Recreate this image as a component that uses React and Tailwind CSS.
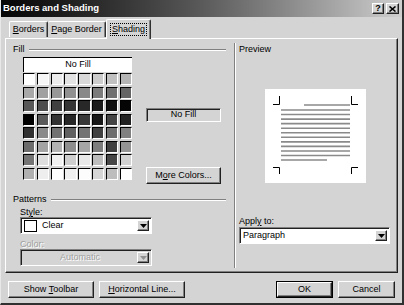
import React from 'react';

const raised = 'border border-t-white border-l-white border-r-[#202020] border-b-[#202020] shadow-[inset_-1px_-1px_0_#808080]';
const sunken = 'border border-t-[#808080] border-l-[#808080] border-r-white border-b-white shadow-[inset_1px_1px_0_#202020]';

const swatches = [
  ['#ffffff', '#f6f6f6', '#ececec', '#e2e2e2', '#d8d8d8', '#cccccc', '#c0c0c0', '#b4b4b4'],
  ['#a8a8a8', '#a0a0a0', '#989898', '#909090', '#888888', '#7c7c7c', '#707070', '#646464'],
  ['#585858', '#4c4c4c', '#404040', '#343434', '#282828', '#1c1c1c', '#101010', '#050505'],
  ['#000000', '#5a5a5a', '#333333', '#262626', '#383838', '#181818', '#444444', '#222222'],
  ['#303030', '#8a8a8a', '#727272', '#606060', '#747474', '#404040', '#6e6e6e', '#808080'],
  ['#6c6c6c', '#a4a4a4', '#b2b2b2', '#8e8e8e', '#a6a6a6', '#7e7e7e', '#3e3e3e', '#949494'],
  ['#747474', '#dedede', '#f0f0f0', '#cecece', '#e8e8e8', '#bcbcbc', '#464646', '#d2d2d2'],
  ['#b0b0b0', '#eeeeee', '#ffffff', '#f0f0f0', '#fcfcfc', '#d6d6d6', '#bdbdbd', '#ffffff'],
];

function Acc({ children }) {
  return <span className="underline underline-offset-[1px]">{children}</span>;
}

function Arrow({ disabled }) {
  return (
    <div className={`w-[12px] self-stretch flex items-center justify-center bg-[#d4d4d4] ${raised}`}>
      <svg width="7" height="4" viewBox="0 0 7 4">
        <path d="M0 0h7L3.5 4z" fill={disabled ? '#909090' : '#000'} />
      </svg>
    </div>
  );
}

function GroupLabel({ children }) {
  return (
    <div className="flex items-center gap-[4px] h-[11px]">
      <span className="leading-[11px]">{children}</span>
      <div className="flex-1 h-[2px] border-t border-t-[#808080] border-b border-b-white" />
    </div>
  );
}

function PreviewPage() {
  const full = [];
  for (let i = 0; i < 11; i++) full.push(21 + i * 4.55);
  return (
    <div className="w-[101px] h-[94px] bg-white">
      <svg width="101" height="94" viewBox="0 0 101 94" className="block">
        <g stroke="#000" strokeWidth="1" fill="none">
          <path d="M8 15.5H14.5V7" />
          <path d="M93 15.5H86.5V7" />
          <path d="M8 78.5H14.5V85" />
          <path d="M93 78.5H86.5V85" />
        </g>
        <g stroke="#8a8a8a" strokeWidth="1.6">
          <line x1="39" y1="16" x2="85" y2="16" />
          {full.map((y) => (
            <line key={y} x1="16" y1={y} x2="85" y2={y} />
          ))}
          <line x1="16" y1="71" x2="62" y2="71" />
        </g>
      </svg>
    </div>
  );
}

export default function App() {
  return (
    <div className="w-[404px] h-[305px] bg-[#d4d4d4] flex flex-col border-l border-l-[#e8e8e8] border-r-2 border-r-[#303030] border-b-2 border-b-[#303030] font-['Liberation_Sans',Arial,sans-serif] text-[9px] text-black whitespace-nowrap overflow-hidden select-none">
      {/* title bar */}
      <div className="h-[17px] flex items-center pl-[2px] pr-[3px] bg-gradient-to-r from-[#060606] via-[#5a5a5a] to-[#cfcfcf]">
        <span className="text-white font-bold text-[9.5px]">Borders and Shading</span>
        <div className="ml-auto flex gap-[1px]">
          <div className={`w-[12px] h-[11px] bg-[#d4d4d4] flex items-center justify-center font-bold text-[9px] leading-none ${raised}`}>?</div>
          <div className={`w-[13px] h-[11px] bg-[#d4d4d4] flex items-center justify-center ml-[1px] ${raised}`}>
            <svg width="7" height="6" viewBox="0 0 7 6">
              <path d="M0.5 0.5L6.5 5.5M6.5 0.5L0.5 5.5" stroke="#000" strokeWidth="1.6" />
            </svg>
          </div>
        </div>
      </div>

      {/* tabs */}
      <div className="h-[19px] mt-[2px] pl-[8px] flex items-end relative z-10">
        <div className="h-[16px] w-[39px] mb-[1px] flex items-center justify-center border-t border-l border-t-white border-l-white border-r border-r-[#303030] rounded-t-[2px] shadow-[inset_-1px_0_0_#808080]">
          <span><Acc>B</Acc>orders</span>
        </div>
        <div className="h-[16px] w-[58px] mb-[1px] flex items-center justify-center border-t border-t-white border-r border-r-[#303030] rounded-t-[2px] shadow-[inset_-1px_0_0_#808080]">
          <span><Acc>P</Acc>age Border</span>
        </div>
        <div className="h-[20px] w-[45px] -mb-[1px] flex items-center justify-center bg-[#d4d4d4] border-t border-l border-t-white border-l-white border-r border-r-[#303030] rounded-t-[2px] shadow-[inset_-1px_0_0_#808080]">
          <span className="border border-dotted border-black px-[1px] leading-[11px]"><Acc>S</Acc>hading</span>
        </div>
      </div>

      {/* panel */}
      <div className="mx-[4px] h-[235px] border border-t-white border-l-white border-r-[#202020] border-b-[#202020] shadow-[inset_-1px_-1px_0_#808080] flex">
        {/* left column */}
        <div className="w-[220px] pl-[7px] pt-[5px] flex flex-col">
          <GroupLabel>Fill</GroupLabel>
          <div className="flex pl-[10px] mt-[2px]">
            <div className="flex flex-col w-[109px]">
              <div className="h-[15px] bg-white border-t border-l border-black flex items-center justify-center">No Fill</div>
              <div className="grid grid-cols-8 gap-[1.5px] mt-[1px]">
                {swatches.flat().map((c, i) => (
                  <div
                    key={i}
                    className="h-[12px] border-t border-l border-t-black border-l-black border-r border-b border-r-white border-b-white"
                    style={{ backgroundColor: c }}
                  />
                ))}
              </div>
            </div>
            <div className="flex flex-col ml-[14px] w-[75px]">
              <div className={`h-[14px] mt-[51px] flex items-center justify-center ${sunken}`}>No Fill</div>
              <div className={`h-[17px] mt-[45px] flex items-center justify-center ${raised}`}>
                <span>M<Acc>o</Acc>re Colors...</span>
              </div>
            </div>
          </div>

          <div className="mt-[10px]">
            <GroupLabel>Patterns</GroupLabel>
          </div>
          <div className="pl-[7px] flex flex-col">
            <div className="mt-[2px] h-[10px] leading-[10px]">St<Acc>y</Acc>le:</div>
            <div className={`w-[132px] h-[17px] bg-white flex items-center p-[2px] ${sunken}`}>
              <div className="w-[13px] h-[12px] border border-black bg-white ml-[1px]" />
              <span className="ml-[5px] flex-1">Clear</span>
              <Arrow />
            </div>
            <div className="mt-[5px] h-[10px] leading-[10px] text-[#a0a0a0] [text-shadow:1px_1px_0_#fff]">Color:</div>
            <div className={`w-[132px] h-[17px] bg-[#d4d4d4] flex items-center p-[2px] ${sunken}`}>
              <span className="flex-1 text-center text-[#a0a0a0] [text-shadow:1px_1px_0_#fff]">Automatic</span>
              <Arrow disabled />
            </div>
          </div>
        </div>

        {/* right column */}
        <div className="flex-1 flex mt-[4px] mb-[4px] ml-[8px]">
          <div className="w-[2px] border-l border-l-[#808080] border-r border-r-white" />
          <div className="flex-1 flex flex-col pl-[3px] pr-[6px]">
            <div className="h-[11px] leading-[11px] mt-[1px]">Preview</div>
            <div className="flex justify-center mt-[34px]">
              <PreviewPage />
            </div>
            <div className="mt-[33px] h-[10px] leading-[10px]">Appl<Acc>y</Acc> to:</div>
            <div className={`mt-[1px] w-[151px] h-[17px] bg-white flex items-center p-[2px] ${sunken}`}>
              <span className="flex-1 pl-[1px]">Paragraph</span>
              <Arrow />
            </div>
          </div>
        </div>
      </div>

      {/* bottom buttons */}
      <div className="flex mt-[8px] px-[7px]">
        <div className={`w-[86px] h-[17px] flex items-center justify-center ${raised}`}>
          <span>Show <Acc>T</Acc>oolbar</span>
        </div>
        <div className={`w-[86px] h-[17px] ml-[5px] flex items-center justify-center ${raised}`}>
          <span><Acc>H</Acc>orizontal Line...</span>
        </div>
        <div className="ml-auto w-[57px] h-[17px] border border-black flex">
          <div className={`flex-1 flex items-center justify-center ${raised}`}>OK</div>
        </div>
        <div className={`w-[57px] h-[17px] ml-[5px] flex items-center justify-center ${raised}`}>Cancel</div>
      </div>
    </div>
  );
}
